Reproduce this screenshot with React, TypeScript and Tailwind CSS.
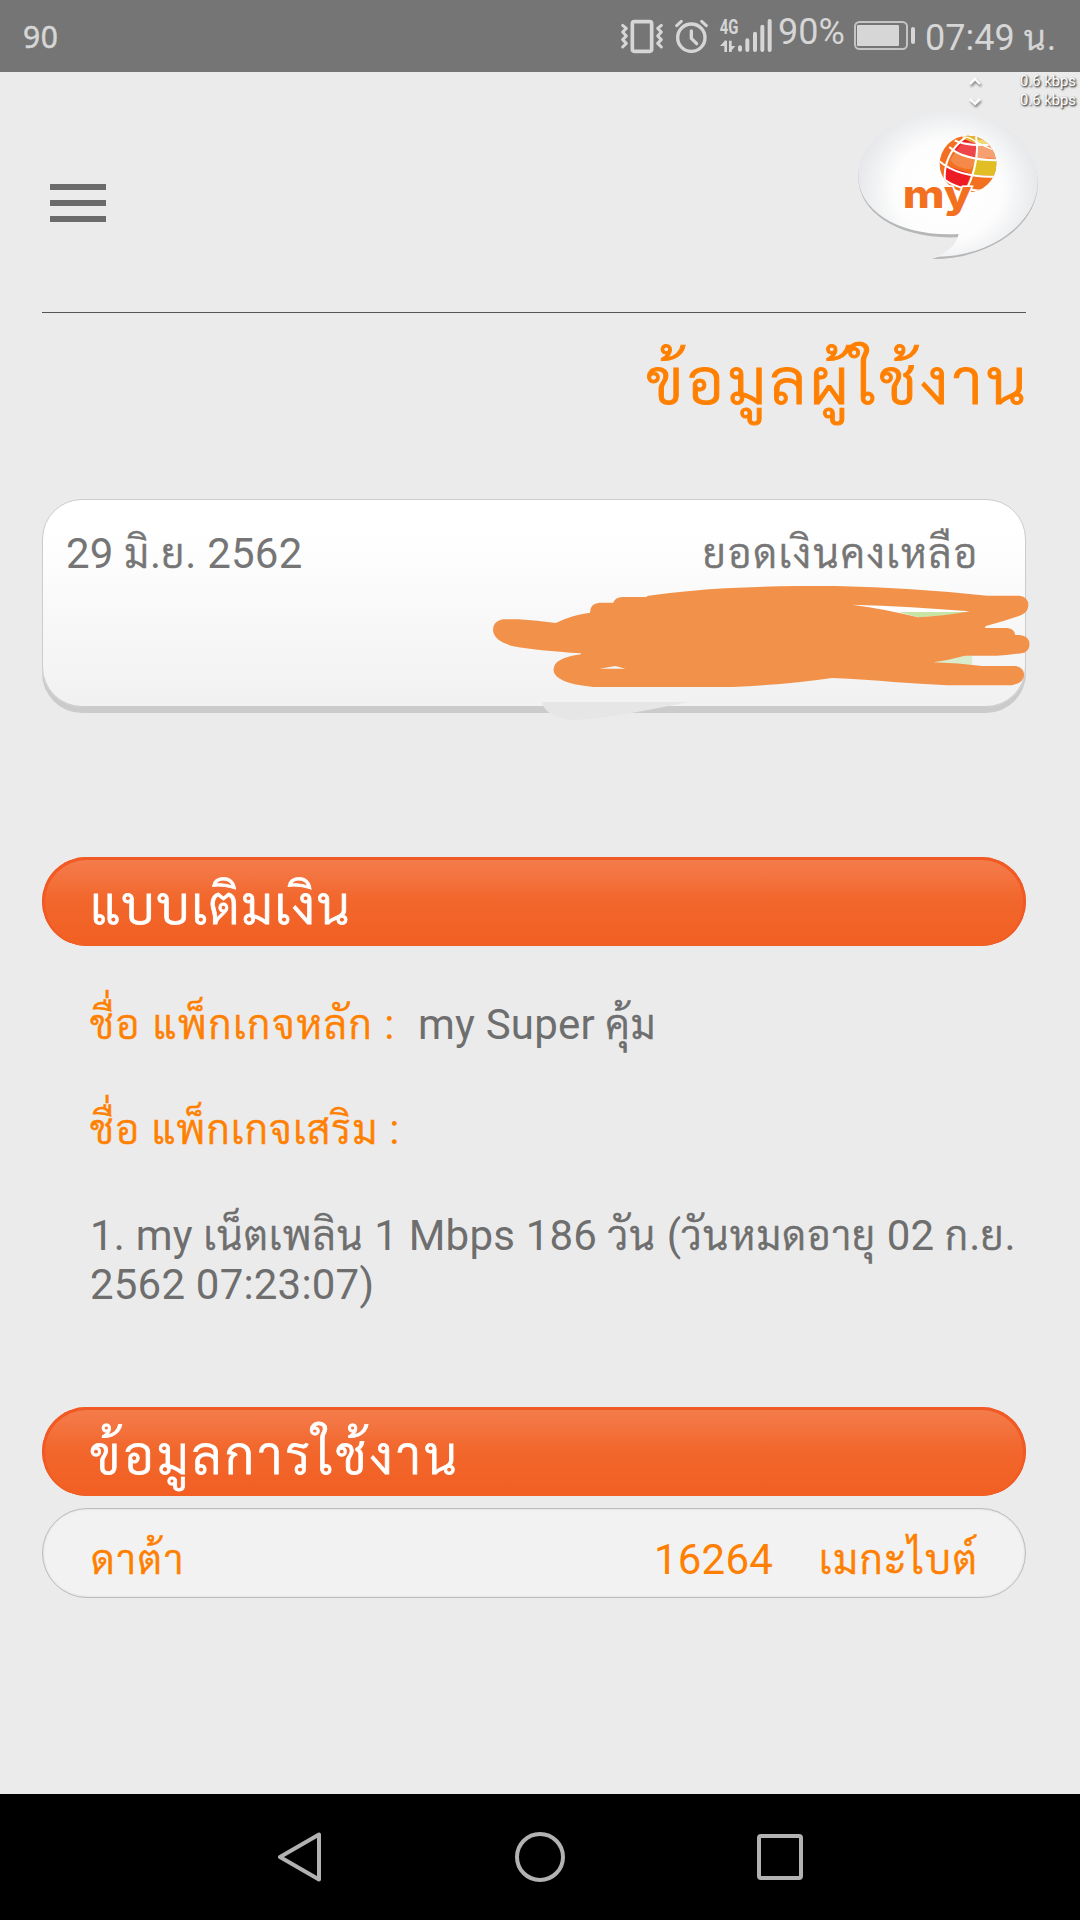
import React from "react";

function Thai({ children, track = "tracking-[1.15px]" }: { children: React.ReactNode; track?: string }) {
  return (
    <span className={`text-[0.964em] font-light leading-none [-webkit-text-stroke:0.015em] [font-family:Roboto,Sarabun,'Noto_Sans_Thai_Looped',sans-serif] ${track}`}>
      {children}
    </span>
  );
}

function StatusIcons() {
  return (
    <svg className="block h-[72px] w-[152px]" viewBox="0 0 456 216" fill="none">
      <g stroke="#d6d6d6" strokeWidth="9" strokeLinejoin="round" strokeLinecap="round">
        <rect x="37" y="65" width="58" height="89" rx="6" strokeWidth="11" />
        <path d="M8 76l11 9-11 11 11 12-11 11 11 11-11 11" />
        <path d="M124 76l-11 9 11 11-11 12 11 11-11 11 11 11" />
        <circle cx="214" cy="113" r="41" strokeWidth="10" />
        <path d="M214 93v22l16 16" strokeWidth="10" />
        <path d="M170 77l14-13M259 77l-14-13" strokeWidth="9" />
      </g>
      <text x="299" y="102" fill="#d6d6d6" fontSize="62" fontWeight="700" fontFamily="Roboto, sans-serif" textLength="56" lengthAdjust="spacingAndGlyphs">4G</text>
      <path d="M317 156v-34M331 122v34" stroke="#d6d6d6" strokeWidth="8" />
      <path d="M300 138l17-18v18zM331 156l15-18h-15z" fill="#d6d6d6" />
      <g stroke="#d6d6d6" strokeWidth="12" strokeLinecap="round">
        <path d="M360 142v7M382 121v29M405 101v49M427 80v70M449 63v87" />
      </g>
    </svg>
  );
}

function Battery() {
  return (
    <svg className="block h-[72px] w-[64px]" viewBox="0 0 64 72" fill="none">
      <rect x="2" y="22" width="52" height="27" rx="4.5" stroke="#c4c4c4" strokeWidth="2" />
      <rect x="4" y="25" width="42" height="21" rx="1" fill="#d6d6d6" />
      <rect x="58" y="27" width="4" height="17" rx="2" fill="#d6d6d6" />
    </svg>
  );
}

function Logo() {
  return (
    <svg className="block h-[170px] w-[220px]" viewBox="0 0 660 510">
      <defs>
        <radialGradient id="bubble" gradientUnits="userSpaceOnUse" cx="324" cy="270" r="290" gradientTransform="translate(0 20) scale(1 .92)">
          <stop offset="0" stopColor="#fff" />
          <stop offset=".55" stopColor="#fdfdfd" />
          <stop offset="1" stopColor="#e3e5e8" />
        </radialGradient>
        <clipPath id="globe"><circle cx="384" cy="192" r="85" /></clipPath>
      </defs>
      <path d="M324 43C474 43 593 131 593 252C593 374 450 479 276 477C318 464 342 444 354 412C180 419 55 340 55 232C55 126 174 43 324 43Z" fill="#b4b6b8" />
      <path d="M324 37C474 37 593 125 593 246C593 368 450 472 286 470C326 456 348 434 356 402C180 411 55 334 55 227C55 121 174 37 324 37Z" fill="url(#bubble)" />
      <g clipPath="url(#globe)">
        <rect x="295" y="100" width="180" height="185" fill="#f37021" />
        <path d="M372 118L412 128L406 174L340 152Z" fill="#ed1c24" />
        <path d="M412 122L475 140V190L406 174Z" fill="#f58a52" />
        <path d="M370 100H445V135Q405 132 370 116Z" fill="#e3b531" />
        <path d="M405 176L475 184V228L394 224Z" fill="#e2be25" />
        <path d="M314 196L394 222L376 266L314 244Z" fill="#ed1c24" />
        <path d="M365 130Q410 110 468 160V176Q410 162 394 208Q350 206 330 180Z" fill="#fff" opacity=".18" />
        <ellipse cx="425" cy="127" rx="21" ry="8" fill="#f3e887" opacity=".75" />
        <g fill="none" stroke="#fff" strokeWidth="6">
          <path d="M328 141Q368 180 470 181" />
          <path d="M344 121Q375 138 448 134" />
          <path d="M298 184Q358 234 470 230" />
          <path d="M304 232Q350 270 425 272" />
          <path d="M376 112Q306 166 315 248" />
          <path d="M408 108Q422 190 373 282" />
          <path d="M366 110Q390 110 412 128Q440 142 462 150" strokeWidth="4" />
        </g>
      </g>
      <text x="188" y="323" fill="#f37021" stroke="#fff" strokeWidth="9" paintOrder="stroke" fontSize="117" fontWeight="800" fontFamily="Inter, sans-serif" textLength="207" lengthAdjust="spacingAndGlyphs">my</text>
    </svg>
  );
}

function Speed({ up }: { up?: boolean }) {
  return (
    <div className="flex h-[19px] items-center justify-between">
      <svg className="h-[14px] w-[14px] drop-shadow-[1px_2px_1px_rgba(0,0,0,0.5)]" viewBox="0 0 14 14" fill="none" stroke="#fff" strokeWidth="2">
        <path d={up ? "M2 9l5-5 5 5" : "M2 5l5 5 5-5"} />
      </svg>
      <span className="text-[14.8px] leading-[19px] text-white [text-shadow:1px_1px_2px_#333,1px_1px_2px_#777]">0.6 kbps</span>
    </div>
  );
}

function Banner({ children }: { children: React.ReactNode }) {
  return (
    <div className="h-[89px] rounded-full bg-[#f15a24]">
      <div className="h-[89px] rounded-full border-x-[3px] border-t-[3px] border-[#f15a24] bg-linear-to-b from-[#f47c4b] via-[#f2672c] via-45% to-[#f25f22] pl-[45px] pt-[5px] text-[54px] leading-[81px] text-white">
        {children}
      </div>
    </div>
  );
}

function Scribble() {
  return (
    <svg className="absolute left-[437px] -top-[20px] h-[250px] w-[600px]" viewBox="0 0 1568 750" preserveAspectRatio="none">
      <path d="M162 666H545Q470 684 400 698Q310 716 240 720Q172 712 162 666Z" fill="#e6e6e6" />
      <path d="M970 374L1280 394L1144 414Z" fill="#fff" />
      <path d="M1095 396H1276L1240 404L1144 412Z" fill="#c7e5a5" />
      <path d="M1183 547L1268 527H1286V557Z" fill="#d9edcc" />
      <path
        fillRule="evenodd"
        fill="#f2914a"
        d="M60 418H100Q150 421 198 429Q240 404 288 398Q286 372 312 368H348Q354 352 372 351H434Q438 347 450 346Q540 332 640 325Q740 319 830 318H930Q1130 323 1325 347H1410Q1433 350 1433 376Q1433 396 1415 405Q1370 424 1322 438L1319 444H1378Q1397 447 1399 465H1410Q1436 468 1436 493Q1436 512 1422 518Q1380 526 1350 527H1268Q1225 540 1185 547Q1250 549 1312 558H1400Q1422 563 1422 586Q1420 609 1390 616H1222Q1150 612 1080 606Q1010 598 920 594Q800 614 660 621H296Q192 610 192 568Q194 533 264 523V520Q150 512 84 498Q34 482 34 448Q36 423 60 418ZM972 374Q1060 387 1144 412Q1220 407 1280 394Q1130 379 972 374ZM312 566H380L354 558Z"
      />
    </svg>
  );
}

export default function App() {
  return (
    <div className="relative flex h-[1920px] w-[1080px] flex-col overflow-hidden bg-[#ebebeb] text-[42px] tracking-[0.2px] text-[#6e6e6e] [font-family:Roboto,sans-serif]">
      <header className="flex h-[72px] shrink-0 items-start bg-[#757575] text-[36px] leading-[72px] tracking-normal text-[#d6d6d6]">
        <span className="ml-[23px] mt-px text-[30px] tracking-[0.5px] [-webkit-text-stroke:0.5px] [font-family:'Noto_Sans',sans-serif]">90</span>
        <div className="ml-auto flex w-[460px]">
          <StatusIcons />
          <span className="-mt-[4px] ml-[6px] w-[75px]">90%</span>
          <Battery />
          <span className="ml-[8px] mt-[2px] whitespace-nowrap">
            07:49 <Thai>น</Thai>.
          </span>
        </div>
      </header>

      <div className="absolute right-[4px] top-[72px] w-[108px] tracking-normal">
        <Speed up />
        <Speed />
      </div>

      <main className="flex flex-1 flex-col pl-[42px] pr-[54px]">
        <div className="flex h-[240px] items-start justify-between">
          <div className="ml-[8px] mt-[112px] flex w-[56px] flex-col gap-[10px]">
            <div className="h-[6px] bg-[#6b6b6b]" />
            <div className="h-[6px] bg-[#6b6b6b]" />
            <div className="h-[6px] bg-[#6b6b6b]" />
          </div>
          <div className="-mr-[34px] mt-[28px]">
            <Logo />
          </div>
        </div>
        <div className="h-px bg-[#555]" />
        <h1 className="mt-[29px] -mr-[4px] h-[80px] whitespace-nowrap text-right text-[66px] leading-[80px] text-[#ff8000]">
          <Thai track="tracking-[3.6px]">ข้อมูลผู้ใช้งาน</Thai>
        </h1>

        <section className="relative mt-[77px] h-[208px] rounded-[40px] border border-[#ccc] bg-linear-to-b from-white from-15% to-[#f1f1f1] shadow-[0_6px_0_#cbcbcb]">
          <div className="flex justify-between pl-[23px] pr-[46px] pt-[29px] leading-[50px] text-[#757575]">
            <span>
              29 <Thai>มิ</Thai>.<Thai>ย</Thai>. 2562
            </span>
            <span><Thai track="tracking-[1.95px]">ยอดเงินคงเหลือ</Thai></span>
          </div>
          <Scribble />
        </section>

        <section className="mt-[150px]">
          <Banner><Thai track="tracking-[1.6px]">แบบเติมเงิน</Thai></Banner>
          <div className="pl-[48px]">
            <div className="mt-[54px] flex h-[50px] whitespace-nowrap leading-[50px]">
              <span className="w-[328px] text-[#ff8000]">
                <Thai track="tracking-[1.85px]">ชื่อ แพ็กเกจหลัก</Thai> :
              </span>
              <span>
                my Super <Thai>คุ้ม</Thai>
              </span>
            </div>
            <div className="mt-[55px] h-[50px] leading-[50px] text-[#ff8000]">
              <Thai track="tracking-[1.5px]">ชื่อ แพ็กเกจเสริม</Thai> :
            </div>
            <div className="mt-[56px] whitespace-nowrap leading-[49px]">
              <div className="h-[49px]">
                1. my <Thai>เน็ตเพลิน</Thai> 1 Mbps 186 <Thai>วัน</Thai> (<Thai>วันหมดอายุ</Thai> 02 <Thai>ก</Thai>.<Thai>ย</Thai>.
              </div>
              <div className="h-[49px]">2562 07:23:07)</div>
            </div>
          </div>
        </section>

        <section className="mt-[98px]">
          <Banner><Thai track="tracking-[3.2px]">ข้อมูลการใช้งาน</Thai></Banner>
          <div className="mt-[12px] flex h-[90px] items-center rounded-full border border-[#bcbcbc] bg-[#f2f2f2] pl-[48px] pr-[46px] pt-[14px] leading-[50px] text-[#ff8000] shadow-[inset_0_0_2px_#ccc]">
            <span><Thai track="tracking-[1.9px]">ดาต้า</Thai></span>
            <span className="ml-auto">16264</span>
            <span className="ml-[46px] w-[160px] whitespace-nowrap text-right"><Thai track="tracking-[1.9px]">เมกะไบต์</Thai></span>
          </div>
        </section>
      </main>

      <nav className="flex h-[126px] shrink-0 items-center justify-center gap-[190px] bg-black">
        <svg className="h-[50px] w-[50px]" viewBox="0 0 50 50" fill="none" stroke="#b2b2b2" strokeWidth="4" strokeLinejoin="round">
          <path d="M44 2.500V47.500L5 25Z" />
        </svg>
        <svg className="h-[50px] w-[50px]" viewBox="0 0 50 50" fill="none" stroke="#b2b2b2" strokeWidth="4">
          <circle cx="25" cy="25" r="23" />
        </svg>
        <svg className="h-[50px] w-[50px]" viewBox="0 0 50 50" fill="none" stroke="#b2b2b2" strokeWidth="4">
          <rect x="4" y="4" width="42" height="42" rx="2" />
        </svg>
      </nav>
    </div>
  );
}
